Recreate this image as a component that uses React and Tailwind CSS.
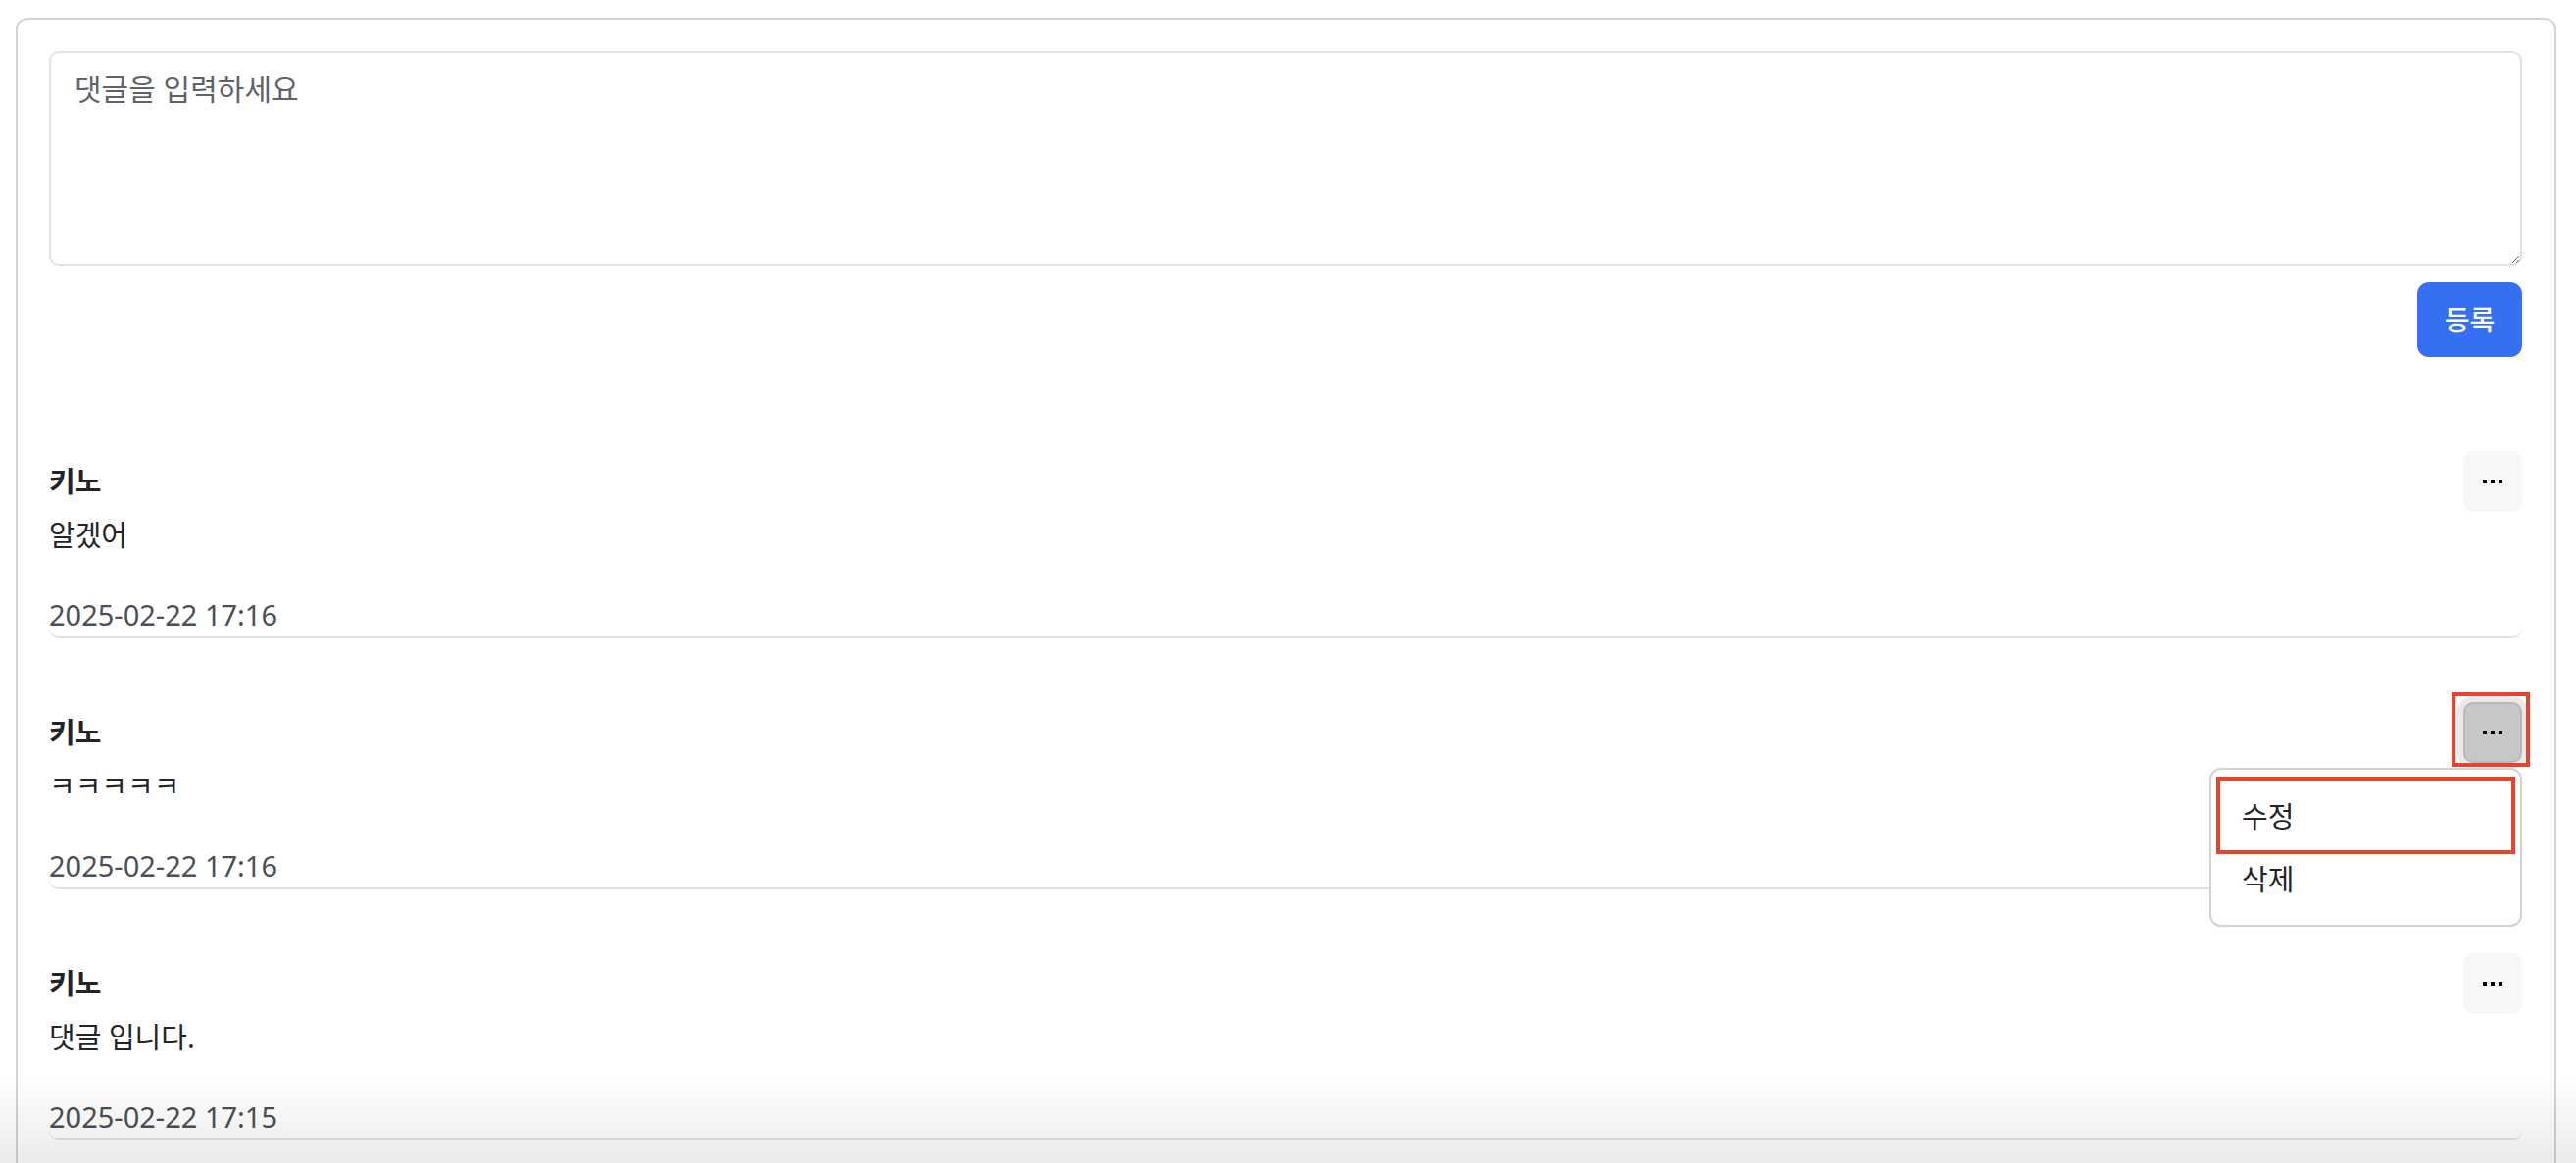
import { useState } from "react";

const COMMENTS = [
  { id: 1, name: "키노", body: "알겠어", date: "2025-02-22 17:16" },
  { id: 2, name: "키노", body: "ㅋㅋㅋㅋㅋ", date: "2025-02-22 17:16" },
  { id: 3, name: "키노", body: "댓글 입니다.", date: "2025-02-22 17:15" },
];

function Dots() {
  return (
    <span className="flex items-center gap-[4px]">
      <span className="w-[4px] h-[4px] bg-black" />
      <span className="w-[4px] h-[4px] bg-black" />
      <span className="w-[4px] h-[4px] bg-black" />
    </span>
  );
}

function Comment({ comment, open }) {
  return (
    <div className="border-b-2 border-[#dee2e6] rounded-[10px] pb-[4px]">
      <div className="flex items-center justify-between h-[62px]">
        <span className="text-[29px] leading-[30px] font-bold text-[#212529]">{comment.name}</span>
        <div className="relative">
          <button
            className={
              open
                ? "w-[60px] h-[62px] rounded-[10px] flex items-center justify-center bg-[#c6c7c9] border-2 border-[#b7b8ba] ring-[6px] ring-[#e9e9eb]"
                : "w-[60px] h-[62px] rounded-[10px] flex items-center justify-center bg-[#f6f7f9]"
            }
          >
            <Dots />
          </button>
          {open && (
            <>
              <div className="absolute left-[-12px] right-[-8px] top-[-10px] bottom-[-4px] border-4 border-[#e5452c] pointer-events-none" />
              <div className="absolute right-0 top-[67px] w-[319px] z-10 bg-white border-2 border-[#d2d2d2] rounded-[12px] pt-[16px] pb-[14px]">
                <div className="absolute left-[5px] top-[7px] w-[305px] h-[79px] border-4 border-[#e5452c]" />
                <div className="pl-[31px] text-[29px] leading-[64px] text-[#212529]">수정</div>
                <div className="pl-[31px] text-[29px] leading-[64px] text-[#212529]">삭제</div>
              </div>
            </>
          )}
        </div>
      </div>
      <p className="mt-[4px] text-[29px] leading-[40px] text-[#212529]">{comment.body}</p>
      <p className="mt-[43px] text-[29px] leading-[36px] text-[#4b5056]">{comment.date}</p>
    </div>
  );
}

export default function App() {
  const [text, setText] = useState("");

  return (
    <main className="min-h-screen bg-white pt-[18px] pl-[16px] pr-[20px] font-['Noto_Sans','Noto_Sans_CJK_KR',sans-serif]">
      <div className="border-2 border-[#d4d4d4] rounded-[12px] pl-[32px] pr-[33px] pt-[32px] pb-[40px]">
        <textarea
          value={text}
          onChange={(e) => setText(e.target.value)}
          placeholder="댓글을 입력하세요"
          className="block w-full h-[219px] border-2 border-[#dfe3e8] rounded-[10px] pt-[21px] pl-[24px] text-[30px] leading-[32px] text-[#212529] placeholder:text-[#5f6368] outline-none"
        />
        <div className="flex justify-end mt-[17px]">
          <button className="w-[107px] h-[76px] rounded-[12px] bg-[#3470f1] text-white text-[28px] font-medium">
            등록
          </button>
        </div>

        <div className="mt-[96px] flex flex-col gap-[65px]">
          {COMMENTS.map((c) => (
            <Comment key={c.id} comment={c} open={c.id === 2} />
          ))}
        </div>
      </div>

      <div className="fixed inset-x-0 bottom-0 h-[90px] bg-linear-to-b from-transparent to-black/[0.08] pointer-events-none" />
    </main>
  );
}
